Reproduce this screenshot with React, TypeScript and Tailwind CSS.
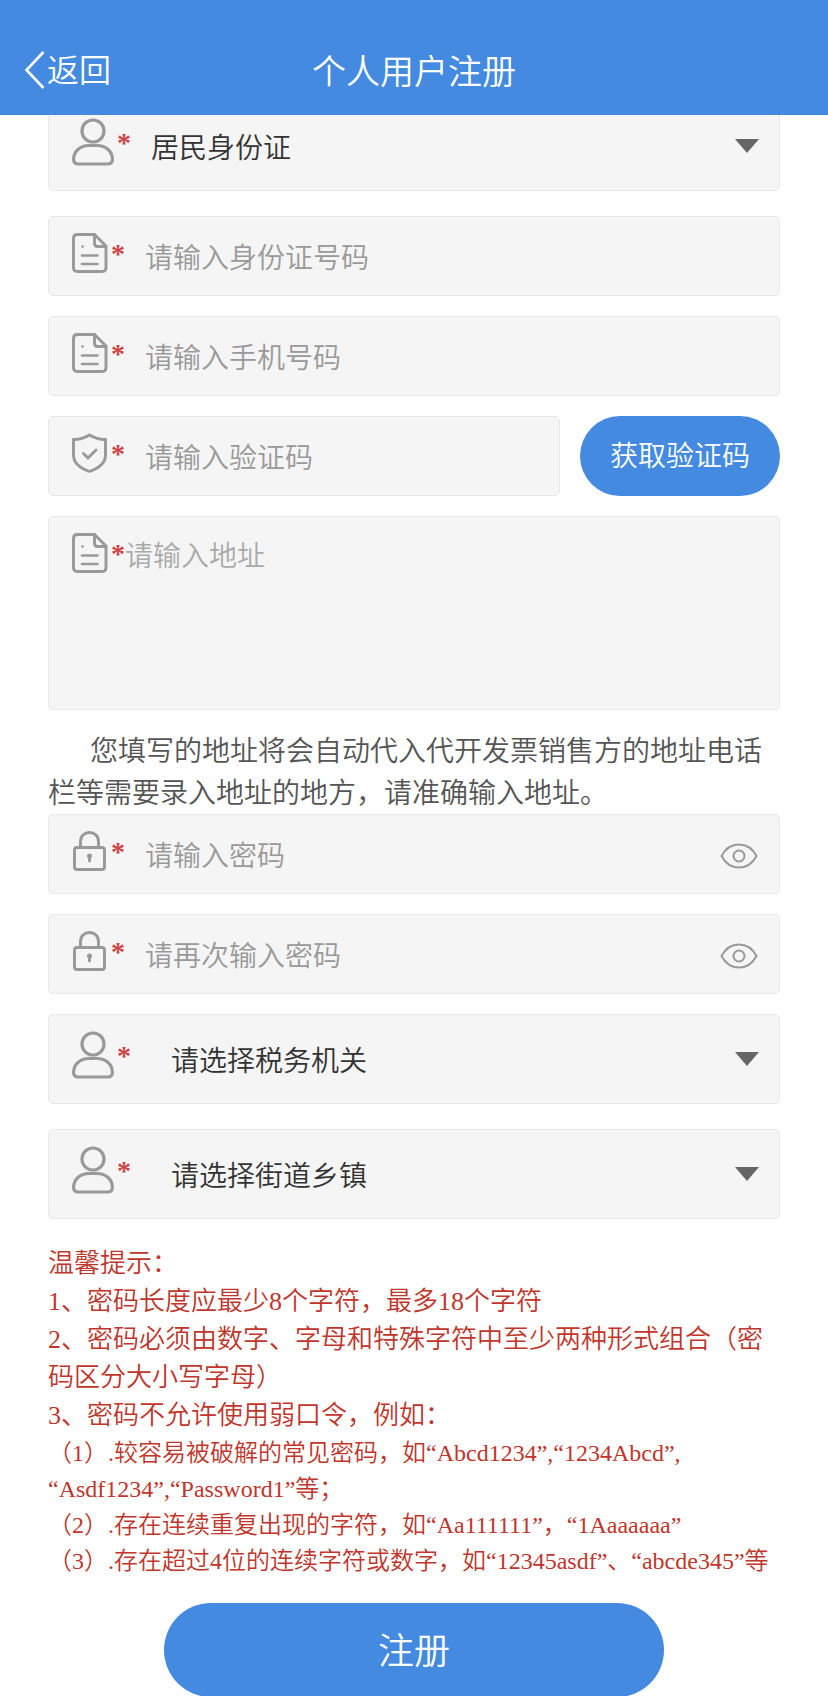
import { useState, type ReactNode } from "react";

type IconName = "user" | "file" | "shield" | "lock";

type TextFieldProps = {
  id: string;
  label: string;
  icon: IconName;
  type?: string;
  className?: string;
};

type SelectFieldProps = {
  id: string;
  label: string;
  options: string[];
  compact?: boolean;
};

const passwordRules = [
  "1、密码长度应最少8个字符，最多18个字符",
  "2、密码必须由数字、字母和特殊字符中至少两种形式组合（密码区分大小写字母）",
  "3、密码不允许使用弱口令，例如：",
];

function FieldIcon({ name }: { name: IconName }) {
  const common = {
    fill: "none",
    stroke: "#999999",
    strokeLinecap: "round",
    strokeLinejoin: "round",
    "aria-hidden": true,
  } as const;

  if (name === "user") {
    return (
      <svg width="42" height="48" viewBox="0 0 42 48" strokeWidth="3.2" {...common}>
        <circle cx="21" cy="13" r="11" />
        <path d="M6.5 46C3.2 46 1.6 44.2 1.6 41.5C1.6 33.500 8 27.500 17 27.500H25C34 27.500 40.400 33.500 40.400 41.500C40.400 44.200 38.800 46 35.500 46Z" />
      </svg>
    );
  }

  if (name === "file") {
    return (
      <svg width="36" height="40" viewBox="0 0 36 40" strokeWidth="2.900" {...common}>
        <path d="M22.500 1.500H5.500C3 1.500 1.500 3 1.500 5.500V34.500C1.500 37 3 38.500 5.500 38.500H30C32.500 38.500 34 37 34 34.500V13Z" />
        <path d="M22.500 1.500V10C22.500 12 23.500 13.500 25.500 13.500H34" />
        <path d="M10.500 13.500H10.600M10 22.500H25.500M10 31H25.500" strokeWidth="2.600" />
      </svg>
    );
  }

  if (name === "shield") {
    return (
      <svg width="36" height="40" viewBox="0 0 36 40" strokeWidth="2.900" {...common} strokeLinejoin="miter">
        <path d="M17.500 2C13.500 4.500 8 6.500 1.500 6.500V22C1.500 29.500 7.500 35 17.500 38.500C27.500 35 33.500 29.500 33.500 22V6.500C27 6.500 21.500 4.500 17.500 2Z" />
        <path d="M11.500 20.500L16 25L24 17" />
      </svg>
    );
  }

  return (
    <svg width="36" height="40" viewBox="0 0 36 40" strokeWidth="2.900" {...common}>
      <rect x="2.500" y="16.500" width="30" height="22" rx="2.500" />
      <path d="M8.500 16.500V10.500C8.500 5 12.300 1.500 17.500 1.500S26.500 5 26.500 10.500V16.500" />
      <circle cx="17.500" cy="25" r="1.500" fill="#999999" strokeWidth="2" />
      <path d="M17.500 26V30" />
    </svg>
  );
}

function EyeIcon() {
  return (
    <svg width="38" height="26" viewBox="0 0 38 26" fill="none" stroke="#999999" strokeWidth="2" aria-hidden="true">
      <path d="M1.500 13C5.500 5.500 12 1.500 19 1.500S32.500 5.500 36.500 13C32.500 20.500 26 24.500 19 24.500S5.500 20.500 1.500 13Z" />
      <circle cx="19" cy="13" r="5.500" />
    </svg>
  );
}

function FieldLabel({ id, icon }: { id: string; icon: IconName }) {
  return (
    <label htmlFor={id} className="flex shrink-0 items-center gap-[3px] self-start pt-4">
      <FieldIcon name={icon} />
      <span className="pt-0.5 font-['Liberation_Serif',serif] text-[28px] leading-none font-bold text-[#cc4444]">
        *
      </span>
    </label>
  );
}

function FieldBox({ className = "h-20", children }: { className?: string; children: ReactNode }) {
  return (
    <div className={["flex min-w-0 rounded-[5px] border border-[#e8e8e8] bg-[#f5f5f5] pl-[23px]", className].join(" ")}>
      {children}
    </div>
  );
}

function TextField({ id, label, icon, type = "text", className }: TextFieldProps) {
  return (
    <FieldBox className={className}>
      <FieldLabel id={id} icon={icon} />
      <input
        id={id}
        type={type}
        aria-label={label}
        placeholder={label}
        className="min-w-0 flex-1 bg-transparent pl-5 text-[28px] text-[#333333] outline-none placeholder:text-[#999999]"
      />
    </FieldBox>
  );
}

function PasswordField({ id, label }: { id: string; label: string }) {
  const [visible, setVisible] = useState(false);

  return (
    <FieldBox>
      <FieldLabel id={id} icon="lock" />
      <input
        id={id}
        type={visible ? "text" : "password"}
        aria-label={label}
        placeholder={label}
        className="min-w-0 flex-1 bg-transparent pl-5 text-[28px] text-[#333333] outline-none placeholder:text-[#999999]"
      />
      <button
        type="button"
        aria-label={visible ? "隐藏密码" : "显示密码"}
        className="px-[21px] pt-1"
        onClick={() => setVisible(!visible)}
      >
        <EyeIcon />
      </button>
    </FieldBox>
  );
}

function SelectField({ id, label, options, compact = false }: SelectFieldProps) {
  return (
    <FieldBox className="relative h-[90px]">
      <FieldLabel id={id} icon="user" />
      <select
        id={id}
        aria-label={label}
        className={[
          "min-w-0 flex-1 appearance-none bg-transparent pr-16 text-[28px] text-[#333333] outline-none",
          compact ? "pl-5" : "pl-10",
        ].join(" ")}
      >
        {options.map((option) => (
          <option key={option}>{option}</option>
        ))}
      </select>
      <svg
        className="pointer-events-none absolute top-[37px] right-5"
        width="24"
        height="14"
        viewBox="0 0 24 14"
        aria-hidden="true"
      >
        <path d="M0 0H24L12 14Z" fill="#666666" />
      </svg>
    </FieldBox>
  );
}

export default function App() {
  return (
    <div className="min-h-screen bg-white font-['Noto_Sans_CJK_SC',sans-serif] font-[350]">
      <header className="sticky top-0 z-10 grid h-[115px] grid-cols-[1fr_auto_1fr] items-center bg-[#438ae0] px-6 pt-6 text-white">
        <a href="#" className="flex items-center text-[32px] leading-10">
          <svg width="23" height="38" viewBox="0 0 23 38" fill="none" stroke="currentColor" strokeWidth="2.6" aria-hidden="true">
            <path d="M19.500 1L2.500 19L19.500 37" />
          </svg>
          <span className="pb-1">返回</span>
        </a>
        <h1 className="text-[34px] leading-10">个人用户注册</h1>
      </header>

      <form className="-mt-3.5 px-12" onSubmit={(event) => event.preventDefault()}>
        <div className="flex flex-col gap-5">
          <div className="pb-[5px]">
            <SelectField id="id-type" label="证件类型" options={["居民身份证"]} compact />
          </div>
          <TextField id="id-number" label="请输入身份证号码" icon="file" />
          <TextField id="phone" label="请输入手机号码" icon="file" />

          <div className="flex gap-5">
            <TextField id="code" label="请输入验证码" icon="shield" className="h-20 flex-1" />
            <button type="button" className="w-[200px] rounded-full bg-[#438ae0] pb-1 text-[28px] text-white">
              获取验证码
            </button>
          </div>

          <FieldBox className="h-[194px]">
            <FieldLabel id="address" icon="file" />
            <textarea
              id="address"
              aria-label="请输入地址"
              placeholder="请输入地址"
              className="min-w-0 flex-1 resize-none bg-transparent pt-4 text-[28px] leading-[42px] text-[#333333] outline-none placeholder:text-[#aaaaaa]"
            />
          </FieldBox>
        </div>

        <p className="mt-[18px] mb-0.5 indent-[42px] text-[28px] leading-[42px] text-[#555555]">
          您填写的地址将会自动代入代开发票销售方的地址电话栏等需要录入地址的地方，请准确输入地址。
        </p>

        <div className="flex flex-col gap-5">
          <PasswordField id="password" label="请输入密码" />
          <PasswordField id="password-again" label="请再次输入密码" />
          <SelectField id="tax-office" label="税务机关" options={["请选择税务机关"]} />
          <div className="pt-[5px]">
            <SelectField id="street" label="街道乡镇" options={["请选择街道乡镇"]} />
          </div>
        </div>

        <section className="mt-[26px] font-['Liberation_Serif','Noto_Sans_CJK_SC',serif] text-[#c0362c]">
          <div className="text-[26px] leading-[38px]">
            <h2>温馨提示：</h2>
            {passwordRules.map((rule) => (
              <p key={rule}>{rule}</p>
            ))}
          </div>
          <div className="text-[24px] leading-9">
            <p>
              （1）.较容易被破解的常见密码，如“Abcd1234”,“1234Abcd”,
              <br />
              “Asdf1234”,“Password1”等；
            </p>
            <p>（2）.存在连续重复出现的字符，如“Aa111111”，“1Aaaaaaa”</p>
            <p>（3）.存在超过4位的连续字符或数字，如“12345asdf”、“abcde345”等</p>
          </div>
        </section>

        <button
          type="submit"
          className="mx-auto mt-6 block h-[94px] w-[500px] max-w-full rounded-full bg-[#438ae0] pb-1 text-[36px] text-white"
        >
          注册
        </button>
      </form>
    </div>
  );
}
